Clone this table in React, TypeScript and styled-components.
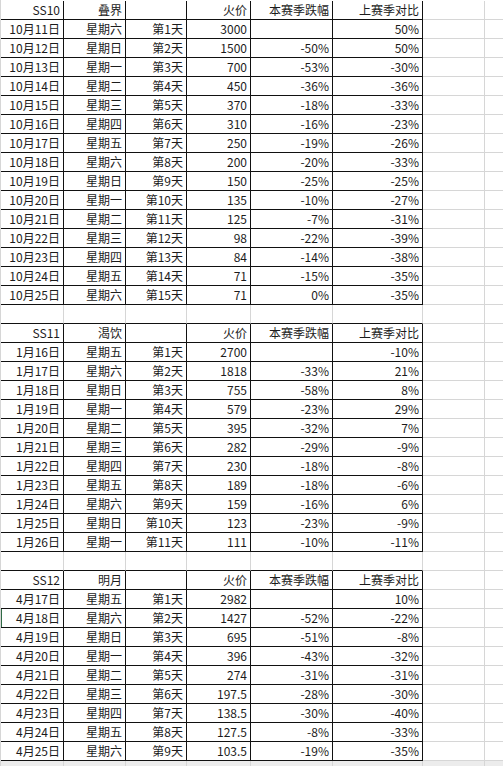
import styled, { createGlobalStyle } from 'styled-components'

const GlobalStyle = createGlobalStyle`
  html, body {
    margin: 0;
    padding: 0;
    background: #ffffff;
  }
  body {
    font-family: "Noto Sans CJK SC", "Noto Sans", sans-serif;
    color: #1c1c1c;
    overflow: hidden;
  }
`

const GRID = '#d6d6d6'
const INK = '#111111'
const widths = [63, 62, 61, 64, 82, 90, 62, 60]

type Block = { head: string[]; rows: string[][] }

const blocks: Block[] = [
  {
    head: ['SS10', '叠界', '', '火价', '本赛季跌幅', '上赛季对比'],
    rows: [
      ['10月11日', '星期六', '第1天', '3000', '', '50%'],
      ['10月12日', '星期日', '第2天', '1500', '-50%', '50%'],
      ['10月13日', '星期一', '第3天', '700', '-53%', '-30%'],
      ['10月14日', '星期二', '第4天', '450', '-36%', '-36%'],
      ['10月15日', '星期三', '第5天', '370', '-18%', '-33%'],
      ['10月16日', '星期四', '第6天', '310', '-16%', '-23%'],
      ['10月17日', '星期五', '第7天', '250', '-19%', '-26%'],
      ['10月18日', '星期六', '第8天', '200', '-20%', '-33%'],
      ['10月19日', '星期日', '第9天', '150', '-25%', '-25%'],
      ['10月20日', '星期一', '第10天', '135', '-10%', '-27%'],
      ['10月21日', '星期二', '第11天', '125', '-7%', '-31%'],
      ['10月22日', '星期三', '第12天', '98', '-22%', '-39%'],
      ['10月23日', '星期四', '第13天', '84', '-14%', '-38%'],
      ['10月24日', '星期五', '第14天', '71', '-15%', '-35%'],
      ['10月25日', '星期六', '第15天', '71', '0%', '-35%'],
    ],
  },
  {
    head: ['SS11', '渴饮', '', '火价', '本赛季跌幅', '上赛季对比'],
    rows: [
      ['1月16日', '星期五', '第1天', '2700', '', '-10%'],
      ['1月17日', '星期六', '第2天', '1818', '-33%', '21%'],
      ['1月18日', '星期日', '第3天', '755', '-58%', '8%'],
      ['1月19日', '星期一', '第4天', '579', '-23%', '29%'],
      ['1月20日', '星期二', '第5天', '395', '-32%', '7%'],
      ['1月21日', '星期三', '第6天', '282', '-29%', '-9%'],
      ['1月22日', '星期四', '第7天', '230', '-18%', '-8%'],
      ['1月23日', '星期五', '第8天', '189', '-18%', '-6%'],
      ['1月24日', '星期六', '第9天', '159', '-16%', '6%'],
      ['1月25日', '星期日', '第10天', '123', '-23%', '-9%'],
      ['1月26日', '星期一', '第11天', '111', '-10%', '-11%'],
    ],
  },
  {
    head: ['SS12', '明月', '', '火价', '本赛季跌幅', '上赛季对比'],
    rows: [
      ['4月17日', '星期五', '第1天', '2982', '', '10%'],
      ['4月18日', '星期六', '第2天', '1427', '-52%', '-22%'],
      ['4月19日', '星期日', '第3天', '695', '-51%', '-8%'],
      ['4月20日', '星期一', '第4天', '396', '-43%', '-32%'],
      ['4月21日', '星期二', '第5天', '274', '-31%', '-31%'],
      ['4月22日', '星期三', '第6天', '197.5', '-28%', '-30%'],
      ['4月23日', '星期四', '第7天', '138.5', '-30%', '-40%'],
      ['4月24日', '星期五', '第8天', '127.5', '-8%', '-33%'],
      ['4月25日', '星期六', '第9天', '103.5', '-19%', '-35%'],
    ],
  },
]

type Line = { cells: string[]; boxed: boolean; mark?: boolean }

const lines: Line[] = []
blocks.forEach((b, i) => {
  lines.push({ cells: b.head, boxed: true })
  b.rows.forEach((r) => lines.push({ cells: r, boxed: true, mark: r[0] === '4月18日' }))
  if (i < blocks.length - 1) lines.push({ cells: [], boxed: false })
})
lines.push({ cells: [], boxed: false })

const Sheet = styled.div`
  padding-top: 1px;
  border-left: 1px solid ${GRID};
  width: 503px;
  height: 766px;
  box-sizing: border-box;
  overflow: hidden;
`

const Row = styled.div<{ $tail?: boolean }>`
  display: flex;
  height: 19px;
  background: ${(p) => (p.$tail ? '#ececec' : 'transparent')};
`

const Cell = styled.div<{ $w: number; $right: string; $bottom: string; $mark?: boolean }>`
  flex: 0 0 ${(p) => p.$w}px;
  box-sizing: border-box;
  height: 19px;
  border-right: 1px solid ${(p) => p.$right};
  border-bottom: 1px solid ${(p) => p.$bottom};
  box-shadow: ${(p) => (p.$mark ? 'inset 1px 0 0 #2f6b46' : 'none')};
  padding: 0 3px 0 2px;
  display: flex;
  align-items: center;
  justify-content: flex-end;
  font-size: 12px;
  line-height: 18px;
  white-space: nowrap;
  overflow: hidden;
`

const App = () => {
  return (
    <>
      <GlobalStyle />
      <Sheet>
        {lines.map((line, r) => {
          const below = lines[r + 1]
          const tail = r === lines.length - 1
          return (
            <Row key={r} $tail={tail}>
              {widths.map((w, c) => {
                const inBlock = line.boxed && c < 6
                const belowBoxed = !!below && below.boxed && c < 6
                const right = inBlock ? INK : GRID
                const bottom = inBlock || belowBoxed ? INK : GRID
                return (
                  <Cell
                    key={c}
                    $w={w}
                    $right={right}
                    $bottom={bottom}
                    $mark={line.mark && c === 0}
                  >
                    {line.cells[c] ?? ''}
                  </Cell>
                )
              })}
            </Row>
          )
        })}
      </Sheet>
    </>
  )
}

export default App
